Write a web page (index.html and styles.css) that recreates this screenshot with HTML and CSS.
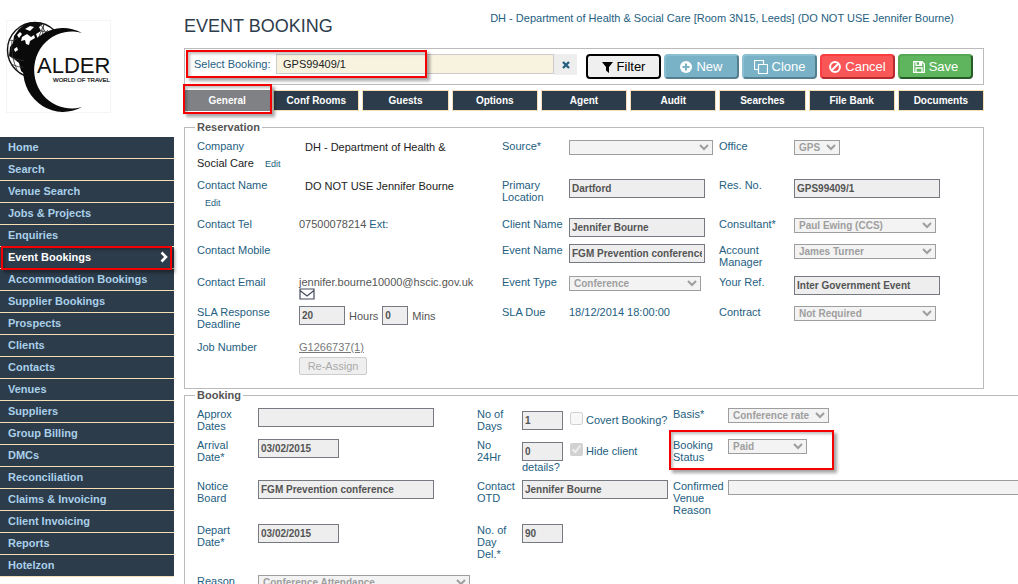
FILE: index.html
```html
<!DOCTYPE html>
<html lang="en">
<head>
  <meta charset="UTF-8" />
  <meta name="viewport" content="width=device-width, initial-scale=1.0"/>
  <title>Event Booking</title>
  <link rel="stylesheet" href="styles.css">
</head>
<body>
  <aside class="sidebar">
    <svg class="logo" viewBox="6 20 105 93" role="img" aria-label="Alder World of Travel">
      <rect x="6.5" y="20.5" width="104" height="92" fill="#fff" stroke="#f3f3f8"/>
      <clipPath id="globe"><circle cx="35" cy="50" r="28"/></clipPath>
      <circle cx="35" cy="50" r="27.5" fill="#fff" stroke="#111" stroke-width="1.4"/>
      <g clip-path="url(#globe)">
        <path d="M14 36 L19 29 L27 23 L36 21 L44 23 L39 27 L41 31 L36 34 L38 39 L35 43 L36 50 L30 56 L27 62 L27 76 L21 71 L19 63 L14 59 L9 56 L10 47 L13 43Z" fill="#0a0a0a"/>
        <path d="M25 29 l5 -3 l4 1 l-4 4z M17 35 l3 -3 l2 2 l-3 4z M22 37 l5 -3 l4 3 l3 -2 l1 3 l-5 3 l-1 4 l-3 -1 l-1 -4 l-4 1z M14 49 l3 -2 l1 3 l-3 2z" fill="#fff"/>
        <path d="M8 40 Q14 42 18 38 M7 54 Q18 62 26 60 M11 64 Q18 68 26 67 M41 31 L50 33 M36 43 L48 30 M39 22 L48 36 M38 39 L44 24 M12 40 Q10 56 18 72 M44 23 L42 38" fill="none" stroke="#333" stroke-width="0.8"/>
      </g>
      <ellipse cx="66" cy="70" rx="40" ry="42" fill="#fff"/>
      <path d="M82 33 A40 42 0 1 0 82 107 A37.500 38.500 0 1 1 82 33Z" fill="#0a0a0a"/>
      <text class="logo-name" x="37" y="73">ALDER</text>
      <text class="logo-sub" x="53" y="82">WORLD OF TRAVEL</text>
    </svg>
    <nav class="menu">
      <a href="#">Home</a>
      <a href="#">Search</a>
      <a href="#">Venue Search</a>
      <a href="#">Jobs &amp; Projects</a>
      <a href="#">Enquiries</a>
      <a href="#" class="active">Event Bookings
        <svg width="8" height="12" viewBox="0 0 8 12"><path d="M1.5 1.5 L6 6 L1.5 10.5" fill="none" stroke="#fff" stroke-width="2.6"/></svg>
        <span class="mark mark-menu"></span>
      </a>
      <a href="#">Accommodation Bookings</a>
      <a href="#">Supplier Bookings</a>
      <a href="#">Prospects</a>
      <a href="#">Clients</a>
      <a href="#">Contacts</a>
      <a href="#">Venues</a>
      <a href="#">Suppliers</a>
      <a href="#">Group Billing</a>
      <a href="#">DMCs</a>
      <a href="#">Reconciliation</a>
      <a href="#">Claims &amp; Invoicing</a>
      <a href="#">Client Invoicing</a>
      <a href="#">Reports</a>
      <a href="#">Hotelzon</a>
    </nav>
  </aside>

  <main>
    <header>
      <h1>EVENT BOOKING</h1>
      <div class="account">DH - Department of Health &amp; Social Care [Room 3N15, Leeds] (DO NOT USE Jennifer Bourne)</div>
    </header>

    <div class="toolbar">
      <label for="select-booking">Select Booking:</label>
      <input type="text" id="select-booking" value="GPS99409/1" />
      <button class="clear" aria-label="Clear">
        <svg width="8" height="8" viewBox="0 0 8 8"><path d="M1 1 L7 7 M7 1 L1 7" stroke="#24607f" stroke-width="2.4"/></svg>
      </button>
      <div class="actions">
        <button class="filter">
          <svg width="11" height="12" viewBox="0 0 11 12"><path d="M0 1 H11 L7 6 V12 L4 9.500 V6Z" fill="#000"/></svg>Filter
        </button>
        <button class="new">
          <svg width="12" height="12" viewBox="0 0 12 12"><circle cx="6" cy="6" r="6" fill="#fff"/><path d="M6 2.500 V9.500 M2.500 6 H9.500" stroke="#79b2c7" stroke-width="2"/></svg>New
        </button>
        <button class="new">
          <svg width="14" height="14" viewBox="0 0 14 14"><path d="M4.500 4.500 H13.500 V13.500 H4.500Z M9.500 4 V0.500 H0.500 V9.500 H4" fill="none" stroke="#fff" stroke-width="1.200"/></svg>Clone
        </button>
        <button class="cancel">
          <svg width="12" height="12" viewBox="0 0 12 12"><circle cx="6" cy="6" r="4.900" fill="none" stroke="#fff" stroke-width="2"/><path d="M2.500 9.500 L9.500 2.500" stroke="#fff" stroke-width="2"/></svg>Cancel
        </button>
        <button class="save">
          <svg width="12" height="12" viewBox="0 0 12 12"><path d="M0.700 0.700 H9 L11.300 3 V11.300 H0.700Z M3 1 V4.300 H8.500 V1 M3 11 V7 H9 V11" fill="none" stroke="#fff" stroke-width="1.300"/><path d="M6 1 H8 V4 H6Z" fill="#fff"/></svg>Save
        </button>
      </div>
      <span class="mark mark-search"></span>
    </div>

    <div class="tabs">
      <button class="current">General<span class="mark mark-tab"></span></button>
      <button>Conf Rooms</button>
      <button>Guests</button>
      <button>Options</button>
      <button>Agent</button>
      <button>Audit</button>
      <button>Searches</button>
      <button>File Bank</button>
      <button>Documents</button>
    </div>

    <fieldset>
      <legend>Reservation</legend>
      <div class="reservation">
        <div class="person">
          <span class="caption">Company</span>
          <span class="value">DH - Department of Health &amp; Social Care</span> <a href="#" class="edit">Edit</a>
        </div>
        <label for="source">Source*</label>
        <div><select id="source" class="w144" disabled><option></option></select></div>
        <label for="office">Office</label>
        <div><select id="office" class="w46" disabled><option>GPS</option></select></div>

        <div class="person">
          <span class="caption">Contact Name</span>
          <span class="value">DO NOT USE Jennifer Bourne</span> <a href="#" class="edit">Edit</a>
        </div>
        <label for="location">Primary Location</label>
        <div><input type="text" id="location" class="w136" value="Dartford" disabled /></div>
        <label for="res-no">Res. No.</label>
        <div><input type="text" id="res-no" class="w146" value="GPS99409/1" disabled /></div>

        <span class="caption">Contact Tel</span>
        <div class="text">07500078214 <span class="blue">Ext:</span></div>
        <label for="client">Client Name</label>
        <div><input type="text" id="client" class="w136" value="Jennifer Bourne" disabled /></div>
        <label for="consultant">Consultant*</label>
        <div><select id="consultant" class="w142" disabled><option>Paul Ewing (CCS)</option></select></div>

        <span class="caption">Contact Mobile</span>
        <div></div>
        <label for="event-name">Event Name</label>
        <div><input type="text" id="event-name" class="w136" value="FGM Prevention conference" disabled /></div>
        <label for="manager">Account Manager</label>
        <div><select id="manager" class="w142" disabled><option>James Turner</option></select></div>

        <span class="caption">Contact Email</span>
        <div class="text">jennifer.bourne10000@hscic.gov.uk
          <a href="#" class="mail" aria-label="Send email"><svg width="16" height="12" viewBox="0 0 16 12"><path d="M1 1 H15 V11 H1Z M1 2.500 L8 8 L15 2.500" fill="none" stroke="#444a5c" stroke-width="1.200"/></svg></a>
        </div>
        <label for="event-type">Event Type</label>
        <div><select id="event-type" class="w132" disabled><option>Conference</option></select></div>
        <label for="your-ref">Your Ref.</label>
        <div><input type="text" id="your-ref" class="w146" value="Inter Government Event" disabled /></div>

        <label for="sla-hours">SLA Response Deadline</label>
        <div class="sla">
          <input type="text" id="sla-hours" class="w46" value="20" disabled /> Hours
          <input type="text" id="sla-mins" class="w26" value="0" aria-label="Minutes" disabled /> Mins
        </div>
        <span class="caption">SLA Due</span>
        <div class="text blue">18/12/2014 18:00:00</div>
        <label for="contract">Contract</label>
        <div><select id="contract" class="w142" disabled><option>Not Required</option></select></div>

        <span class="caption">Job Number</span>
        <div class="text">
          <a href="#" class="job">G1266737(1)</a>
          <button class="reassign" disabled>Re-Assign</button>
        </div>
      </div>
    </fieldset>

    <fieldset class="wide">
      <legend>Booking</legend>
      <div class="booking">
        <label for="approx">Approx Dates</label>
        <div><input type="text" id="approx" class="w176" disabled /></div>
        <label for="days">No of Days</label>
        <div class="checks">
          <input type="text" id="days" class="w41" value="1" disabled />
          <label><input type="checkbox" disabled />Covert Booking?</label>
        </div>
        <label for="basis">Basis*</label>
        <div><select id="basis" class="w101" disabled><option>Conference rate</option></select></div>

        <label for="arrival">Arrival Date*</label>
        <div><input type="text" id="arrival" class="w81" value="03/02/2015" disabled /></div>
        <label for="no24">No<br>24Hr</label>
        <div class="checks">
          <input type="text" id="no24" class="w41" value="0" disabled />
          <label><input type="checkbox" checked disabled />Hide client details?</label>
        </div>
        <label for="status" class="status">Booking Status<span class="mark mark-status"></span></label>
        <div><select id="status" class="w79" disabled><option>Paid</option></select></div>

        <label for="notice">Notice Board</label>
        <div><input type="text" id="notice" class="w176" value="FGM Prevention conference" disabled /></div>
        <label for="otd">Contact OTD</label>
        <div><input type="text" id="otd" class="w146" value="Jennifer Bourne" disabled /></div>
        <label for="reason-venue">Confirmed Venue Reason</label>
        <div><select id="reason-venue" class="full" disabled><option></option></select></div>

        <label for="depart">Depart Date*</label>
        <div><input type="text" id="depart" class="w81" value="03/02/2015" disabled /></div>
        <label for="day-del">No. of Day Del.*</label>
        <div><input type="text" id="day-del" class="w41" value="90" disabled /></div>
        <div></div>
        <div></div>

        <label for="reason">Reason</label>
        <div><select id="reason" class="w212" disabled><option>Conference Attendance</option></select></div>
      </div>
    </fieldset>
  </main>
</body>
</html>
```

FILE: styles.css
```css
* {
  box-sizing: border-box;
}
body {
  margin: 0;
  height: 100vh;
  overflow: hidden;
  display: flex;
  background: white;
  color: #24607f;
  font-family: "Liberation Sans", Arial, sans-serif;
  font-size: 11px;
  line-height: 12px;
}
input, button, select {
  font-family: inherit;
  margin: 0;
}
a {
  color: #24607f;
  text-decoration: none;
}

/* sidebar */
.sidebar {
  flex: 0 0 174px;
}
.logo {
  display: block;
  width: 105px;
  margin: 20px 0 24px 6px;
}
.logo-name {
  font-size: 22px;
  fill: #111;
}
.logo-sub {
  font-size: 6px;
  fill: #111;
  stroke: #111;
  stroke-width: 0.2px;
}
.menu a {
  display: flex;
  justify-content: space-between;
  align-items: center;
  position: relative;
  height: 22px;
  padding: 0 6px 1px 8px;
  background: #2d3c4b;
  border-bottom: 1px solid #f5deb3;
  color: #a9d0ea;
  font-weight: bold;
}
.menu a.active {
  color: white;
}

/* red callout frames */
.mark {
  position: absolute;
  border: 2px solid #f50000;
  box-shadow: 3px 3px 3px rgba(0, 0, 0, 0.35), inset 2px 2px 3px rgba(0, 0, 0, 0.25);
  pointer-events: none;
  z-index: 2;
}
.mark-menu {
  inset: -1px 2px -2px 1px;
}
.mark-search {
  left: 1px;
  top: 1px;
  width: 241px;
  height: 28px;
}
.mark-tab {
  inset: -7px -3px -4px -2px;
}
.mark-status {
  left: -4px;
  top: -9px;
  width: 165px;
  height: 40px;
}

/* header and toolbar */
main {
  flex: 1;
  min-width: 0;
  padding: 0 34px 0 10px;
}
header {
  display: flex;
  justify-content: space-between;
  height: 48px;
  padding-right: 30px;
}
h1 {
  margin: 15px 0 0;
  font-size: 18px;
  line-height: 22px;
  font-weight: normal;
  color: #2d3c4b;
}
.account {
  margin-top: 12px;
}
.toolbar {
  position: relative;
  display: flex;
  align-items: flex-start;
  border: 1px solid #bbb;
  padding: 5px 10px 5px 9px;
}
.toolbar label {
  width: 82px;
  line-height: 20px;
}
.toolbar > input {
  flex: 1;
  min-width: 0;
  height: 20px;
  padding: 0 6px;
  border: 1px solid #ccc;
  background: #f7f3df;
  color: #222;
  font-size: 11px;
}
.clear {
  width: 23px;
  height: 21px;
  margin-right: 9px;
  padding: 0;
  border: 0;
  background: #eee;
}
.actions {
  display: flex;
  gap: 3px;
}
.actions button {
  display: flex;
  align-items: center;
  justify-content: center;
  gap: 4px;
  width: 75px;
  height: 25px;
  padding: 0;
  border: 2px solid;
  border-radius: 4px;
  color: white;
  font-size: 13px;
}
.actions .filter {
  background: #efefef;
  border-color: #000;
  color: #000;
}
.actions .new {
  background: #79b2c7;
  border-color: #8abfd2 #557f8f #557f8f #8abfd2;
}
.actions .cancel {
  background: #f95658;
  border-color: #fb3c40 #b52c2f #b52c2f #fb3c40;
}
.actions .save {
  background: #5fb55d;
  border-color: #55a953 #285c27 #285c27 #55a953;
}

/* tabs */
.tabs {
  display: grid;
  grid-template-columns: repeat(9, 1fr);
  gap: 3px;
  margin: 5px 0 10px;
}
.tabs button {
  position: relative;
  height: 21px;
  padding: 0;
  border: 1px solid #f5deb3;
  background: #2d3c4b;
  color: white;
  font-size: 10px;
  font-weight: bold;
}
.tabs .current {
  background: #808184;
  border-color: #808184;
}

/* forms */
fieldset {
  min-width: 0;
  margin: 0;
  padding: 7px 11px 12px 12px;
  border: 1px solid #bbb;
}
fieldset.wide {
  margin-right: -80px;
}
legend {
  margin-left: -2px;
  padding: 0 2px;
  color: #555;
  font-weight: bold;
}
.reservation {
  display: grid;
  grid-template-columns: 102px 203px 67px 150px 75px 1fr;
  grid-template-rows: 39px 39px 26px 32px 30px 35px 35px;
}
.booking {
  display: grid;
  grid-template-columns: 61px 219px 45px 151px 55px 1fr;
  grid-template-rows: 31px 41px 44px 51px 40px;
}
.reservation > label, .booking > label, .caption, .text {
  padding-right: 3px;
}
.status {
  position: relative;
}
.person {
  grid-column: span 2;
  width: 280px;
  margin-top: -1px;
  line-height: 16px;
}
.person .caption {
  float: left;
  width: 102px;
  padding-top: 1px;
  line-height: 12px;
}
.person .value {
  padding-left: 6px;
  color: #222;
}
.edit {
  display: inline-block;
  margin-left: 8px;
  font-size: 9px;
  line-height: 12px;
}
.text, .sla {
  color: #555;
}
.sla {
  display: flex;
  align-items: center;
  gap: 4px;
  height: 19px;
}
.text.blue, .blue {
  color: #24607f;
}
.mail, .job {
  display: block;
}
.job {
  color: #777;
  text-decoration: underline;
}
.mail svg {
  display: block;
}
.reassign {
  width: 68px;
  height: 18px;
  margin-top: 4px;
  padding: 0;
  border: 1px solid #ccc;
  border-radius: 2px;
  background: #efefef;
  color: #aaa;
  font-size: 11px;
}
fieldset input[type="text"] {
  height: 19px;
  padding: 1px 2px;
  border: 1px solid #767a80;
  background: #eee;
  color: #545454;
  font-size: 10px;
  font-weight: bold;
}
select {
  display: block;
  height: 15px;
  padding: 0;
  border: 1px solid #767676;
  border-radius: 0;
  background: #eee;
  color: #767676;
  font-size: 10px;
  font-weight: bold;
}
.checks {
  padding-top: 3px;
}
.checks input[type="checkbox"] {
  width: 13px;
  height: 13px;
  margin: 0 3px 0 4px;
  vertical-align: -1px;
}
.w26 { width: 26px; }
.w41 { width: 41px; }
.w46 { width: 46px; }
.w79 { width: 79px; }
.w81 { width: 81px; }
.w101 { width: 101px; }
.w132 { width: 132px; }
.w136 { width: 136px; }
.w142 { width: 142px; }
.w144 { width: 144px; }
.w146 { width: 146px; }
.w176 { width: 176px; }
.w212 { width: 212px; }
.full { width: 100%; }
```
